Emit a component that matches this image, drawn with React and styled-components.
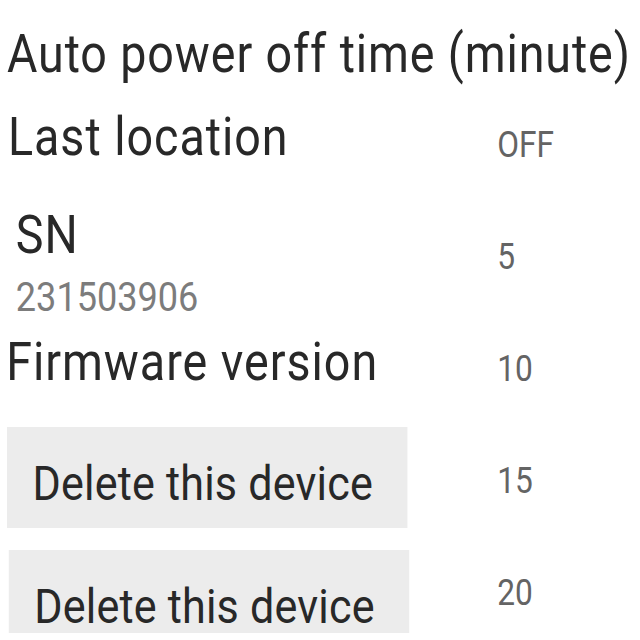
import React from 'react';
import styled, { createGlobalStyle } from 'styled-components';

// the source screenshot is squeezed horizontally, so the page is laid out
// wider and then scaled down on x
const SQUEEZE = 0.88;

const GlobalStyle = createGlobalStyle`
  html, body {
    margin: 0;
    padding: 0;
    background: #ffffff;
    overflow: hidden;
  }
  body {
    font-family: Roboto, "Noto Sans", sans-serif;
  }
`;

const Page = styled.div`
  width: ${640 / SQUEEZE}px;
  height: 640px;
  padding-top: 24px;
  box-sizing: border-box;
  transform: scaleX(${SQUEEZE});
  transform-origin: 0 0;
  display: flex;
  flex-direction: column;
`;

const Title = styled.div`
  font-size: 53px;
  line-height: 60px;
  letter-spacing: 1px;
  color: #282828;
  padding-left: 8px;
  white-space: nowrap;
`;

const Body = styled.div`
  display: flex;
  align-items: flex-start;
`;

const Settings = styled.div`
  width: 565px;
  display: flex;
  flex-direction: column;
`;

const Label = styled.div`
  font-size: 53px;
  line-height: 60px;
  letter-spacing: 1.1px;
  color: #282828;
  padding-left: ${p => p.$indent || 9}px;
  margin-top: ${p => p.$gap || 0}px;
  white-space: nowrap;
`;

const SubValue = styled.div`
  font-size: 41px;
  line-height: 48px;
  color: #7c7c7c;
  padding-left: 18px;
  margin-top: 8px;
`;

const DeleteButton = styled.div`
  width: 455px;
  height: ${p => p.$height}px;
  margin-top: ${p => p.$gap}px;
  margin-left: ${p => p.$shift}px;
  box-sizing: border-box;
  padding: 28px 0 0 29px;
  background: #ececec;
  font-size: 49px;
  line-height: 57px;
  letter-spacing: 0.2px;
  color: #282828;
  white-space: nowrap;
`;

const Options = styled.div`
  padding-top: 5px;
  display: flex;
  flex-direction: column;
`;

const Option = styled.div`
  font-size: 36px;
  line-height: 112px;
  color: #646464;
`;

const options = ['OFF', '5', '10', '15', '20'];

const App = () => {
  return (
    <>
      <GlobalStyle />
      <Page>
        <Title>Auto power off time (minute)</Title>
        <Body>
          <Settings>
            <Label $gap={23}>Last location</Label>
            <Label $gap={38} $indent={18}>SN</Label>
            <SubValue>231503906</SubValue>
            <Label $gap={11} $indent={7}>Firmware version</Label>
            <DeleteButton $gap={35} $height={101} $shift={8}>Delete this device</DeleteButton>
            <DeleteButton $gap={22} $height={83} $shift={10}>Delete this device</DeleteButton>
          </Settings>
          <Options>
            {options.map(o => (
              <Option key={o}>{o}</Option>
            ))}
          </Options>
        </Body>
      </Page>
    </>
  );
};

export default App;
